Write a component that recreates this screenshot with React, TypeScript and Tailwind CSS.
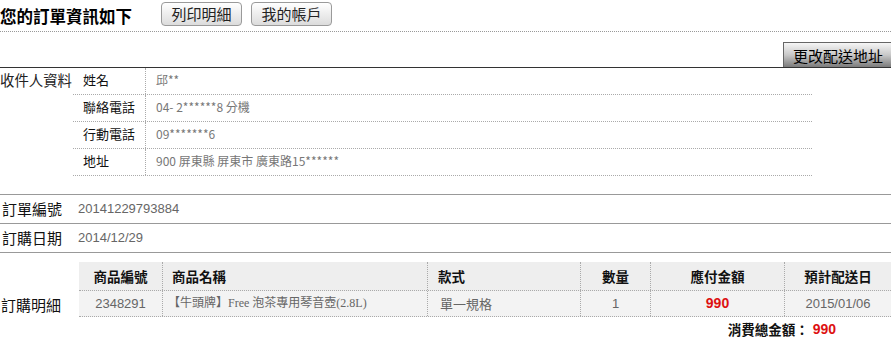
const cjk = "font-['Noto_Sans_CJK_TC',sans-serif]"
const arial = "font-['Liberation_Sans','Noto_Sans_CJK_TC',sans-serif]"

function GrayButton({ children }: { children: string }) {
  return (
    <button
      className={`h-[24px] w-[81px] rounded-[4px] border border-[#9a9a9a] bg-gradient-to-b from-white to-[#dcdcdc] text-[15px] leading-[22px] text-[#222] ${cjk}`}
    >
      {children}
    </button>
  )
}

const recipient = [
  ['姓名', '邱**'],
  ['聯絡電話', '04- 2******8 分機'],
  ['行動電話', '09*******6'],
  ['地址', '900 屏東縣 屏東市 廣東路15******'],
]

const cols = 'grid grid-cols-[84px_265px_153px_70px_134px_106px]'

export default function App() {
  return (
    <div className={`w-[891px] h-[343px] overflow-hidden bg-white text-black ${cjk}`}>
      {/* title */}
      <div className="h-[32px] flex items-center border-b border-dotted border-[#999]">
        <h1 className="w-[161px] whitespace-nowrap text-[16.5px] font-bold leading-[20px]">您的訂單資訊如下</h1>
        <div className="flex gap-[9px] -mt-[4px]">
          <GrayButton>列印明細</GrayButton>
          <GrayButton>我的帳戶</GrayButton>
        </div>
      </div>

      {/* change address */}
      <div className="pt-[10px] flex justify-end border-b border-[#333]">
        <button className="h-[25px] w-[108px] pl-[9px] text-left border border-r-0 border-b-0 border-[#666] bg-gradient-to-b from-[#f6f6f6] via-[#c8c8c8] to-[#7c7c7c] text-[15px] leading-[23px] text-black">
          更改配送地址
        </button>
      </div>

      {/* recipient */}
      <div className="flex">
        <div className="w-[73px] pt-[2px] whitespace-nowrap text-[14.4px] leading-[20px] text-[#222]">收件人資料</div>
        <div className="w-[739px]">
          {recipient.map(([k, v]) => (
            <div key={k} className="h-[27px] flex border-b border-dotted border-[#aaa]">
              <div className="w-[73px] pl-[10px] border-r border-dotted border-[#aaa] text-[13px] leading-[24px] text-[#111]">
                {k}
              </div>
              <div className="pl-[10px] text-[12px] leading-[24px] text-[#777]">{v}</div>
            </div>
          ))}
        </div>
      </div>

      {/* order number / date */}
      <div className="mt-[18px] border-t border-[#999]">
        {[
          ['訂單編號', '20141229793884'],
          ['訂購日期', '2014/12/29'],
        ].map(([k, v]) => (
          <div key={k} className="h-[29px] flex items-center border-b border-[#999]">
            <div className="w-[78px] pl-[2px] text-[15px] leading-[20px] text-[#111]">{k}</div>
            <div className={`text-[13px] text-[#666] ${arial}`}>{v}</div>
          </div>
        ))}
      </div>

      {/* order detail */}
      <div className="flex">
        <div className="w-[79px] pt-[42px] pl-[1px] text-[15px] leading-[20px] text-[#111]">訂購明細</div>
        <div className="w-[812px] pt-[9px]">
          <div className={`${cols} h-[29px] bg-[#eee] border-b border-dotted border-[#aaa] text-[13.5px] font-bold leading-[28px] text-[#111]`}>
            <div className="text-center border-r border-dotted border-[#aaa]">商品編號</div>
            <div className="pl-[9px] border-r border-dotted border-[#aaa]">商品名稱</div>
            <div className="pl-[10px] border-r border-dotted border-[#aaa]">款式</div>
            <div className="text-center border-r border-dotted border-[#aaa]">數量</div>
            <div className="text-center border-r border-dotted border-[#aaa]">應付金額</div>
            <div className="text-center">預計配送日</div>
          </div>
          <div className={`${cols} h-[26px] bg-[#f3f3f3] border-b border-dotted border-[#aaa] text-[13px] leading-[25px] text-[#666]`}>
            <div className={`text-center border-r border-dotted border-[#aaa] ${arial}`}>2348291</div>
            <div className="pl-[5px] border-r border-dotted border-[#aaa] text-[12px] font-['Liberation_Serif','Noto_Sans_CJK_TC',serif]">
              【牛頭牌】Free 泡茶專用琴音壺(2.8L)
            </div>
            <div className="pl-[12px] border-r border-dotted border-[#aaa]">單一規格</div>
            <div className={`text-center border-r border-dotted border-[#aaa] ${arial}`}>1</div>
            <div className={`text-center border-r border-dotted border-[#aaa] font-bold text-[14px] text-[#dd1111] ${arial}`}>990</div>
            <div className={`text-center ${arial}`}>2015/01/06</div>
          </div>
          <div className="h-[25px] flex items-center justify-end pr-[55px] gap-[4px] text-[13.5px] font-bold">
            <span className="text-[#111]">消費總金額：</span>
            <span className={`text-[14px] text-[#dd1111] ${arial}`}>990</span>
          </div>
        </div>
      </div>
    </div>
  )
}
